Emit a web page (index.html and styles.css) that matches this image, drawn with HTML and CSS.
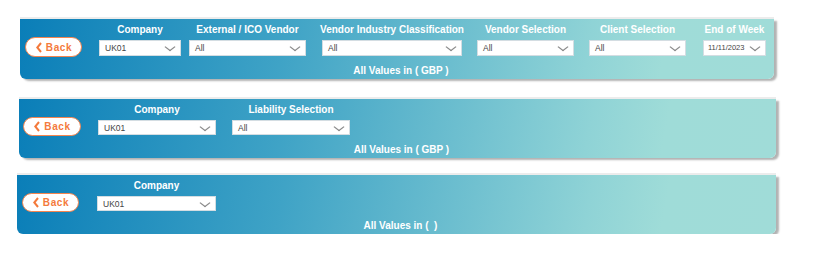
FILE: index.html
```html
<!DOCTYPE html>
<html lang="en">
<head>
  <meta charset="UTF-8" />
  <title>Filters</title>
  <link rel="stylesheet" href="styles.css">
</head>
<body>
  <div class="panel p1">
    <div class="row">
      <button class="back"><svg class="chev" width="6" height="11" viewBox="0 0 6 11"><polyline points="5,1 1.3,5.5 5,10" /></svg>Back</button>
      <div class="filter f-company">
        <label>Company</label>
        <div class="select">UK01</div>
      </div>
      <div class="filter f-ext">
        <label>External / ICO Vendor</label>
        <div class="select">All</div>
      </div>
      <div class="filter f-ind">
        <label>Vendor Industry Classification</label>
        <div class="select">All</div>
      </div>
      <div class="filter f-vend">
        <label>Vendor Selection</label>
        <div class="select">All</div>
      </div>
      <div class="filter f-client">
        <label>Client Selection</label>
        <div class="select">All</div>
      </div>
      <div class="filter f-week">
        <label>End of Week</label>
        <div class="select">11/11/2023</div>
      </div>
    </div>
    <div class="caption">All Values in ( GBP )</div>
  </div>

  <div class="panel p2">
    <div class="row">
      <button class="back"><svg class="chev" width="6" height="11" viewBox="0 0 6 11"><polyline points="5,1 1.3,5.5 5,10" /></svg>Back</button>
      <div class="filter f-company2">
        <label>Company</label>
        <div class="select">UK01</div>
      </div>
      <div class="filter f-liab">
        <label>Liability Selection</label>
        <div class="select">All</div>
      </div>
    </div>
    <div class="caption">All Values in ( GBP )</div>
  </div>

  <div class="panel p3">
    <div class="row">
      <button class="back"><svg class="chev" width="6" height="11" viewBox="0 0 6 11"><polyline points="5,1 1.3,5.5 5,10" /></svg>Back</button>
      <div class="filter f-company3">
        <label>Company</label>
        <div class="select">UK01</div>
      </div>
    </div>
    <div class="caption">All Values in (&nbsp; )</div>
  </div>
</body>
</html>
```

FILE: styles.css
```css
body {
  margin: 0;
  padding-top: 19px;
  font-family: "Liberation Sans", Arial, sans-serif;
  background: #fff;
}
.panel {
  box-sizing: border-box;
  height: 60px;
  padding-top: 4px;
  background: linear-gradient(100deg, #0a7eb8 0%, #3fa3c6 35%, #8fd3d6 75%, #9fdcd8 85%, #a0dcd8 100%);
  border-radius: 0 0 6px 6px;
  box-shadow: 0 -2px 0 #ececec, 3px 2px 2px rgba(0,0,0,0.3);
}
.p1 { margin-left: 20px; width: 754px; }
.p2 { margin-left: 19px; width: 757px; margin-top: 20px; height: 59px; }
.p3 { margin-left: 17px; width: 759px; margin-top: 17px; height: 59px; }

.row {
  display: flex;
  align-items: flex-start;
}
.back {
  box-sizing: border-box;
  display: flex;
  align-items: center;
  justify-content: center;
  width: 57px;
  height: 20px;
  margin: 14px 17px 0 5px;
  padding: 0 0 0 1px;
  background: #fff;
  border: 1.5px solid #f5854f;
  border-radius: 10px;
  color: #f47a3c;
  font-family: inherit;
  font-size: 10px;
  font-weight: bold;
  letter-spacing: 0.6px;
}
.chev {
  margin-right: 4px;
  fill: none;
  stroke: #f47a3c;
  stroke-width: 2;
}
.p2 .back { margin-left: 4px; width: 58px; height: 19px; }
.p3 .back { margin-left: 5px; margin-right: 18px; height: 19px; }

.filter {
  display: flex;
  flex-direction: column;
  align-items: center;
}
.filter label {
  height: 14px;
  line-height: 14px;
  margin-bottom: 3px;
  color: #fff;
  font-size: 10px;
  font-weight: bold;
  white-space: nowrap;
}
.select {
  box-sizing: border-box;
  align-self: stretch;
  position: relative;
  height: 16px;
  line-height: 14px;
  padding-left: 5px;
  background: #fff;
  border: 1px solid #d4dde2;
  color: #444;
  font-size: 8.5px;
}
.select::after {
  content: "";
  position: absolute;
  right: 7px;
  top: 3px;
  width: 5px;
  height: 5px;
  border-right: 1px solid #8a8a8a;
  border-bottom: 1px solid #8a8a8a;
  transform: scaleX(1.3) rotate(45deg);
}
.p2 .select, .p3 .select { height: 15px; }

.f-company { width: 82px; }
.f-ext { width: 117px; margin-left: 8px; }
.f-ind { width: 140px; margin-left: 16px; }
.f-vend { width: 97px; margin-left: 15px; }
.f-client { width: 97px; margin-left: 15px; }
.f-week { width: 63px; margin-left: 17px; }
.f-week .select { padding-left: 4px; font-size: 7.5px; }
.f-company2 { width: 118px; }
.f-liab { width: 118px; margin-left: 16px; }
.f-company3 { width: 119px; }

.caption {
  margin-top: 7px;
  text-align: center;
  color: #fff;
  font-size: 10px;
  font-weight: bold;
  line-height: 14px;
  padding-left: 8px;
}
```
